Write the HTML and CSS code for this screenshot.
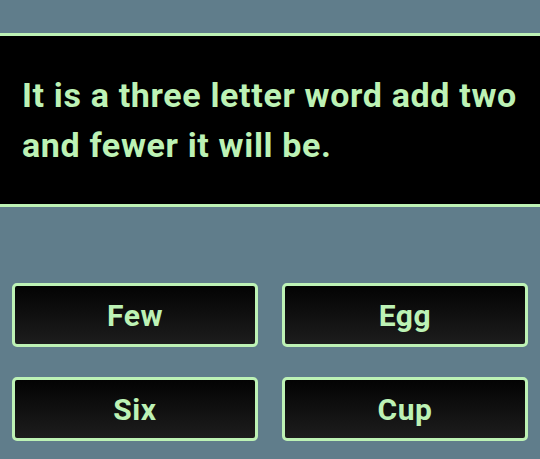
FILE: index.html
```html
<!DOCTYPE html>
<html>
<head>
<meta charset="utf-8">
<link rel="stylesheet" href="styles.css">
</head>
<body>
<div class="question">
  <p class="question-text">It is a three letter word add two and fewer it will be.</p>
</div>
<div class="answers">
  <button class="answer">Few</button>
  <button class="answer">Egg</button>
  <button class="answer">Six</button>
  <button class="answer">Cup</button>
</div>
</body>
</html>
```
FILE: styles.css
```css
html, body {
  margin: 0;
  padding: 0;
}
body {
  background: #607d8b;
  font-family: Roboto, "Noto Sans", sans-serif;
  width: 540px;
  height: 459px;
  overflow: hidden;
}
.question {
  margin-top: 33px;
  background: #000;
  border-top: 3px solid #bdf2b5;
  border-bottom: 3px solid #bdf2b5;
  height: 168px;
  box-sizing: content-box;
  display: flex;
  align-items: center;
  padding: 0 12px 0 22px;
}
.question-text {
  margin: 0;
  color: #bdf2b5;
  font-weight: 700;
  font-size: 34px;
  line-height: 50px;
  letter-spacing: 0.65px;
}
.answers {
  display: grid;
  grid-template-columns: 1fr 1fr;
  column-gap: 24px;
  row-gap: 30px;
  padding: 0 12px;
  margin-top: 76px;
}
.answer {
  height: 64px;
  border: 3px solid #bdf2b5;
  border-radius: 5px;
  background: linear-gradient(to bottom, #030303, #1d1d1d);
  color: #bdf2b5;
  font-family: Roboto, "Noto Sans", sans-serif;
  font-weight: 700;
  font-size: 30px;
  letter-spacing: 0.6px;
  padding: 0;
}
```
